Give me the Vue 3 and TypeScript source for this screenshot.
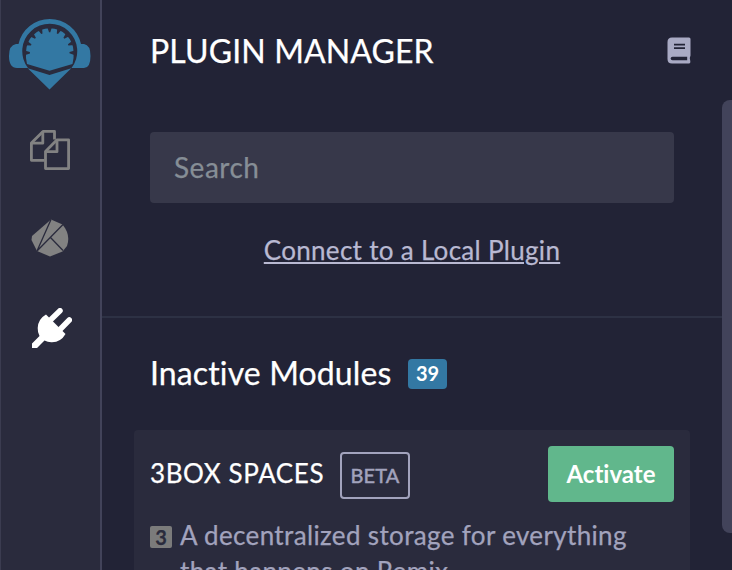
<script setup lang="ts">
interface Plugin {
  name: string
  stage: string
  lines: string[]
}

const plugin: Plugin = {
  name: '3BOX SPACES',
  stage: 'BETA',
  lines: ['A decentralized storage for everything', 'that happens on Remix.'],
}
const inactiveCount = 39

// Notches cut into the rim of the logo's shell, in degrees from the top.
const notches = [-92, -69, -46, -23, 0, 23, 46, 69, 92]
</script>

<template>
  <div class="ide">
    <nav class="icon-panel">
      <svg class="logo" viewBox="0 0 84 72" aria-label="Home">
        <g fill="#3378a3">
          <path d="M10.500 26 A32 32 0 0 1 73 26 H76 Q82.500 27 82.500 38 Q82.500 50 76 50 H63.500 A27.500 27.500 0 1 0 20 50 H9 Q1 50 1 38 Q1 27 8 26 Z" />
          <path d="M19 46 Q17.500 39 18 34 A23.800 23.800 0 0 1 65.600 34 Q66 40 64.500 46 L41.500 52.700 Z" />
          <path d="M19.700 50.300 L41.500 57 L63.300 50.300 L41.500 71.500 Z" />
        </g>
        <path
          v-for="angle in notches"
          :key="angle"
          d="M39 8 L41 14.200 H42.300 L44.300 8 Z"
          fill="#2a2b3d"
          :transform="`rotate(${angle} 41.700 34)`"
        />
      </svg>
      <svg class="files" viewBox="0 0 40 40" fill="none" stroke="#828282" stroke-width="2.800" stroke-linejoin="round">
        <path d="M14.500 30.300 H1.400 V13 L13 1.400 H24.500 V9.500" />
        <path d="M1.500 13.200 H12.800 V1.500" />
        <path d="M15.500 21.500 L27 9.800 H38.600 V38.600 H15.500 Z" />
        <path d="M15.700 21.700 H27 V10" />
      </svg>
      <svg class="compiler" viewBox="0 0 38 38">
        <path d="M20 .5 L31.500 5.500 Q40 16 36 27 L31.500 32.500 L19 37.500 L6 32 L.5 21 L1 17 Z" fill="#828282" />
        <path d="M20 .5 L6 32 M32 5.500 L6 32 M19.500 18.500 L32 31.500" fill="none" stroke="#2a2b3d" stroke-width="1.300" />
      </svg>
      <svg class="plug" viewBox="0 0 40 40" fill="#fff">
        <path d="M14 6.500 L33.500 26 Q29 34 20 34.300 Q16 34.500 12.500 32.500 L5 40 H0 V35.500 L7.500 28 Q5.500 24 5.700 20 Q6 11 14 6.500 Z" />
        <path d="M19 11.500 L28 2.700 M28.500 21 L37.300 12" stroke="#fff" stroke-width="5.500" stroke-linecap="round" />
      </svg>
    </nav>

    <main class="side-panel">
      <header class="title-row">
        <h1>PLUGIN MANAGER</h1>
        <svg class="book" viewBox="0 0 24 27">
          <path d="M5 .5 H22 Q23.500 .5 23.500 2 V18.500 Q22.200 21 23.200 23.500 Q23.800 26.500 22 26.500 H5 Q.5 26.500 .5 22 V5 Q.5 .5 5 .5 Z" fill="#a9aac4" />
          <path d="M7 7.700 H18 M7 11.200 H18" stroke="#222336" stroke-width="1.800" />
          <path d="M5.500 19.800 H20.200 V23.200 H5.500 Q3.700 23 3.700 21.500 Q3.700 20 5.500 19.800 Z" fill="#222336" />
        </svg>
      </header>
      <section class="tools">
        <input class="search" type="text" placeholder="Search" />
        <a class="connect">Connect to a Local Plugin</a>
      </section>
      <section class="modules">
        <div class="modules-head">
          <h2>Inactive Modules</h2>
          <span class="count">{{ inactiveCount }}</span>
        </div>
        <article class="card">
          <div class="card-head">
            <h3>{{ plugin.name }}</h3>
            <span class="stage">{{ plugin.stage }}</span>
            <button class="activate" type="button"><span>Activate</span></button>
          </div>
          <div class="card-body">
            <span class="avatar">3</span>
            <p>
              <span v-for="line in plugin.lines" :key="line" class="line">{{ line }}</span>
            </p>
          </div>
        </article>
      </section>
    </main>
    <div class="scrollbar"></div>
  </div>
</template>

<style>
body {
  background: #222336;
  overflow: hidden;
}
</style>

<style scoped>
* {
  box-sizing: border-box;
}
.ide {
  position: relative;
  display: flex;
  width: 732px;
  height: 570px;
  overflow: hidden;
  background: #222336;
  color: #a2a3bd;
  font-family: Lato, "Liberation Sans", sans-serif;
  font-variant-ligatures: none;
  -webkit-text-stroke: 0.25px currentColor;
}
h1, h2, h3, p {
  margin: 0;
  font-weight: 400;
  white-space: nowrap;
}
svg {
  display: block;
}
.icon-panel {
  flex: 0 0 102px;
  display: flex;
  flex-direction: column;
  align-items: flex-start;
  background: #2a2b3d;
  border-left: 1px solid #3b3c50;
  border-right: 2px solid #42435a;
}
.logo {
  width: 84px;
  height: 72px;
  margin: 18px 0 0 7px;
}
.files {
  width: 40px;
  height: 40px;
  margin: 40px 0 0 29px;
}
.compiler {
  width: 38px;
  height: 38px;
  margin: 49px 0 0 30px;
}
.plug {
  width: 40px;
  height: 40px;
  margin: 51px 0 0 31px;
}
.side-panel {
  flex: 1;
  min-width: 0;
  display: flex;
  flex-direction: column;
}
.title-row {
  flex: none;
  display: flex;
  align-items: center;
  justify-content: space-between;
  height: 100px;
  padding: 0 41px 0 48px;
}
h1 {
  padding-top: 2px;
  color: #fff;
  font-size: 32px;
  line-height: 40px;
  letter-spacing: 0.12px;
}
.book {
  width: 24px;
  height: 27px;
}
.tools {
  flex: none;
  display: flex;
  flex-direction: column;
  align-items: center;
  height: 218px;
  padding: 32px 58px 0 48px;
  border-bottom: 2px solid #2d3144;
}
.search {
  width: 524px;
  height: 71px;
  margin: 0;
  padding: 0 24px 2px;
  border: 0;
  border-radius: 4px;
  background: #37384a;
  font: 28px/36px Lato, "Liberation Sans", sans-serif;
  letter-spacing: 0.5px;
}
.search::placeholder {
  color: #868e96;
  opacity: 1;
}
.connect {
  margin-top: 29px;
  color: #b9b9d2;
  font-size: 26px;
  line-height: 36px;
  letter-spacing: 0.3px;
  text-decoration: underline;
  text-decoration-thickness: 2px;
  text-underline-offset: 2px;
  white-space: nowrap;
}
.modules {
  flex: none;
  padding: 35px 42px 0 32px;
}
.modules-head {
  display: flex;
  align-items: center;
  height: 42px;
  padding-left: 16px;
}
h2 {
  width: 258px;
  padding-bottom: 2px;
  color: #fff;
  font-size: 32px;
  line-height: 40px;
  letter-spacing: 0.12px;
}
.count {
  width: 39px;
  height: 30px;
  border-radius: 4px;
  background: #3378a3;
  color: #fff;
  font-size: 20px;
  font-weight: 700;
  line-height: 29px;
  text-align: center;
  -webkit-text-stroke: 0;
}
.card {
  height: 200px;
  margin-top: 35px;
  padding: 16px;
  border-radius: 4px;
  background: #2a2b3d;
}
.card-head {
  display: flex;
  align-items: center;
  height: 56px;
}
h3 {
  width: 190px;
  padding-bottom: 2px;
  color: #fff;
  font-size: 26px;
  line-height: 36px;
  letter-spacing: 0.6px;
}
.stage {
  width: 70px;
  height: 47px;
  margin-top: 3px;
  border: 2px solid #a2a3bd;
  border-radius: 4px;
  font-size: 20px;
  line-height: 42px;
  letter-spacing: 0.2px;
  text-align: center;
  -webkit-text-stroke: 0.5px currentColor;
}
.activate {
  width: 126px;
  height: 56px;
  margin-left: auto;
  padding: 0;
  border: 0;
  border-radius: 4px;
  background: #61b78c;
  color: #fff;
  font: 700 24px/56px Lato, "Liberation Sans", sans-serif;
  font-variant-ligatures: none;
  -webkit-text-stroke: 0;
}
.card-body {
  display: flex;
  align-items: flex-start;
  padding-top: 15px;
}
.avatar {
  width: 22px;
  height: 22px;
  margin: 9px 8px 0 0;
  border-radius: 2px;
  background: #7b7b7b;
  color: #2a2b3d;
  font-size: 20px;
  font-weight: 700;
  line-height: 22px;
  text-align: center;
}
.line {
  display: block;
  font-size: 26px;
  line-height: 36px;
  letter-spacing: 0.35px;
}
.scrollbar {
  position: absolute;
  top: 100px;
  right: 0;
  width: 10px;
  height: 433px;
  border-radius: 8px 0 0 8px;
  background: #42435a;
}
</style>
